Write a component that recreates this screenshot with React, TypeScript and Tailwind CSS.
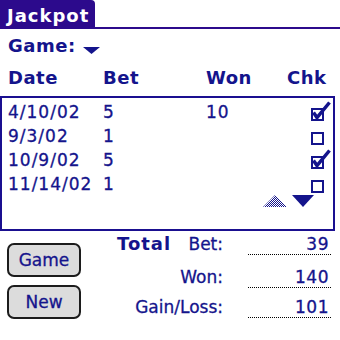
const rows = [
  { date: "4/10/02", bet: "5", won: "10", chk: true },
  { date: "9/3/02", bet: "1", won: "", chk: false },
  { date: "10/9/02", bet: "5", won: "", chk: true },
  { date: "11/14/02", bet: "1", won: "", chk: false },
]

function CheckBox({ checked }: { checked: boolean }) {
  return (
    <svg width="22" height="24" viewBox="0 0 22 24" className="block">
      <rect x="3" y="9" width="11" height="11" fill="white" stroke="#14148c" strokeWidth="2" />
      {checked && (
        <path d="M4.5 12.5 L8 17.5 L20.5 2.5" fill="none" stroke="#14148c" strokeWidth="3.5" strokeLinejoin="miter" />
      )}
    </svg>
  )
}

function ScrollArrows() {
  return (
    <svg width="52" height="13" viewBox="0 0 52 13" className="block">
      <defs>
        <pattern id="dither" width="2" height="2" patternUnits="userSpaceOnUse">
          <rect width="2" height="2" fill="white" />
          <rect width="1" height="1" fill="#14148c" />
          <rect x="1" y="1" width="1" height="1" fill="#14148c" />
        </pattern>
      </defs>
      <path d="M1 12 L13 0 L25 12 Z" fill="url(#dither)" />
      <path d="M30 0 L52 0 L41 12 Z" fill="#14148c" />
    </svg>
  )
}

function TotalRow({ label, value, first }: { label: string; value: string; first?: boolean }) {
  return (
    <div className="flex items-start">
      <div className="flex w-[106px] items-baseline justify-between leading-[20px]">
        {first ? <span className="text-[18px] font-bold tracking-[1px]">Total</span> : <span />}
        <span className="text-[17px] [-webkit-text-stroke:0.3px_#14148c]">{label}</span>
      </div>
      <div className="ml-[25px] h-[21px] w-[83px] border-b border-dotted border-black pr-[2px] text-right text-[17px] leading-[20px] tracking-[0.5px] [-webkit-text-stroke:0.3px_#14148c]">
        {value}
      </div>
    </div>
  )
}

function PalmButton({ children }: { children: React.ReactNode }) {
  return (
    <div className="flex h-[34px] w-[74px] items-center justify-center rounded-[7px] border-2 border-[#1c1c1c] bg-[#dcdcdc] text-[17px] leading-none [-webkit-text-stroke:0.3px_#14148c]">
      {children}
    </div>
  )
}

export default function App() {
  return (
    <div className="h-[340px] w-[340px] overflow-hidden bg-white font-['DejaVu_Sans',sans-serif] text-[#14148c]">
      {/* title */}
      <div className="flex h-[29px] items-end">
        <div className="h-[29px] w-[95px] rounded-tr-[4px] bg-[#2c0a8c] pl-[7px] pt-[5px] text-[18px] font-bold leading-[22px] tracking-[1px] text-white">
          Jackpot
        </div>
        <div className="h-[2px] flex-1 bg-[#2c0a8c]" />
      </div>

      {/* game selector */}
      <div className="mt-[6px] flex items-start pl-[8px] text-[18px] font-bold leading-[22px] tracking-[0.5px]">
        <span>Game:</span>
        <svg width="17" height="7" viewBox="0 0 17 7" className="ml-[7px] mt-[12px] block">
          <path d="M0 0 L17 0 L8.5 7 Z" fill="#14148c" />
        </svg>
      </div>

      {/* headers */}
      <div className="mt-[10px] grid grid-cols-[95px_103px_81px_1fr] pl-[8px] text-[18px] font-bold leading-[22px] tracking-[0.5px]">
        <span>Date</span>
        <span>Bet</span>
        <span>Won</span>
        <span>Chk</span>
      </div>

      {/* table */}
      <div className="mt-[7px] h-[135px] w-[335px] border-2 border-[#1a0f90] pt-[2px]">
        {rows.map((r) => (
          <div
            key={r.date}
            className="flex h-[24px] items-start pl-[6px] text-[17px] leading-[24px] tracking-[1px] [-webkit-text-stroke:0.3px_#14148c]"
          >
            <span className="w-[95px]">{r.date}</span>
            <span className="w-[103px]">{r.bet}</span>
            <span className="flex-1">{r.won}</span>
            <span className="mr-[2px]">
              <CheckBox checked={r.chk} />
            </span>
          </div>
        ))}
        <div className="-mt-px flex justify-end pr-[19px]">
          <ScrollArrows />
        </div>
      </div>

      {/* totals */}
      <div className="flex">
        <div className="flex flex-col gap-[8px] pl-[7px] pt-[12px]">
          <PalmButton>Game</PalmButton>
          <PalmButton>New</PalmButton>
        </div>
        <div className="ml-[36px] pt-[3px]">
          <TotalRow label="Bet:" value="39" first />
          <div className="mt-[12px]">
            <TotalRow label="Won:" value="140" />
          </div>
          <div className="mt-[9px]">
            <TotalRow label="Gain/Loss:" value="101" />
          </div>
        </div>
      </div>
    </div>
  )
}
